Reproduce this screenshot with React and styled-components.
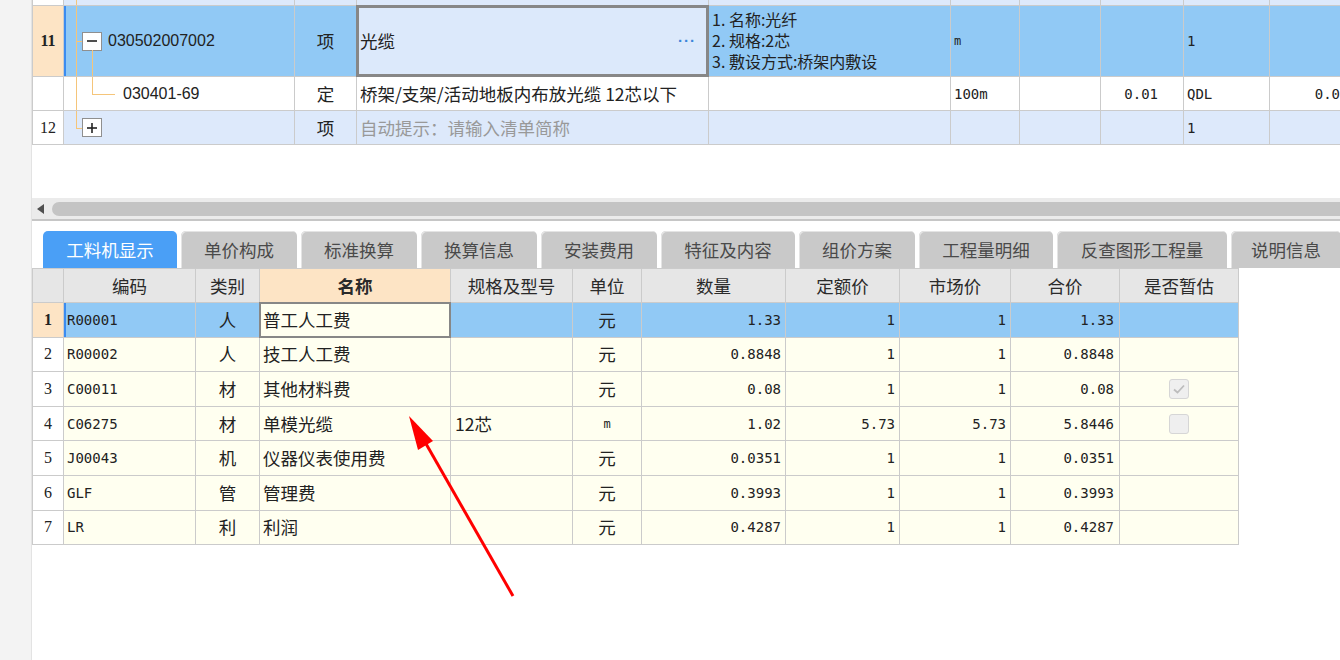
import React from "react";
import styled, { createGlobalStyle } from "styled-components";

const CJK = `"Noto Sans CJK SC", "Noto Sans", sans-serif`;
const MONO = `"DejaVu Sans Mono", "Liberation Mono", "Noto Sans CJK SC", monospace`;
const SANS = `"Liberation Sans", "Noto Sans CJK SC", sans-serif`;
const SERIF = `"Liberation Serif", "Noto Sans CJK SC", serif`;

const LINE = "#cbcbcb";
const SEL = "#91c9f5";
const LIGHT = "#dde9fb";
const PEACH = "#fde4c5";
const CREAM = "#fffff0";
const TREE = "#f5c57a";

const GlobalStyle = createGlobalStyle`
  html, body { margin: 0; padding: 0; background: #fff; overflow: hidden; }
  body { font-family: ${CJK}; color: #222; }
`;

const Page = styled.div`
  position: relative;
  display: flex;
  width: 1340px;
  height: 660px;
  overflow: hidden;
  background: #fff;
`;

const SideStrip = styled.div`
  width: 31px;
  flex: none;
  background: #f3f3f3;
  border-right: 1px solid #e3e3e3;
`;

const Main = styled.div`
  flex: 1;
  min-width: 0;
  display: flex;
  flex-direction: column;
  overflow: hidden;
`;

/* ---------- top table ---------- */
const TopRegion = styled.div`
  height: 198px;
  flex: none;
  background: #fff;
`;

const TopGrid = styled.div`
  display: grid;
  grid-template-columns: 30px 230px 61px 351px 241px 68px 80px 82px 85px 1fr;
  grid-template-rows: 5px 70px 33px 33px;
  gap: 1px;
  background: ${LINE};
  border-left: 1px solid ${LINE};
  border-bottom: 1px solid ${LINE};
`;

const Cell = styled.div`
  display: flex;
  align-items: center;
  min-width: 0;
  overflow: hidden;
  white-space: nowrap;
  background: ${(p) => p.$bg || "#fff"};
  justify-content: ${(p) =>
    p.$align === "center" ? "center" : p.$align === "right" ? "flex-end" : "flex-start"};
  padding: 0 ${(p) => (p.$pr != null ? p.$pr : 3)}px 0 ${(p) => (p.$pl != null ? p.$pl : 3)}px;
  font-family: ${(p) => (p.$mono ? MONO : p.$sans ? SANS : CJK)};
  font-size: ${(p) => p.$size || 17.5}px;
  line-height: 20px;
  color: ${(p) => p.$color || "#222"};
  box-shadow: ${(p) => (p.$mark ? "inset 2px 0 0 #3b8cf0" : "none")};
`;

const RowNum = styled.div`
  display: flex;
  align-items: center;
  justify-content: center;
  background: ${(p) => (p.$active ? PEACH : "#fff")};
  font-family: ${SERIF};
  font-size: 16px;
  font-weight: ${(p) => (p.$active ? 700 : 400)};
  color: #222;
`;

const EditorCell = styled.div`
  position: relative;
  z-index: 1;
  margin: -1px;
  display: flex;
  align-items: center;
  justify-content: space-between;
  border: ${(p) => p.$bw || 3}px solid #878787;
  background: ${(p) => p.$bg};
  padding: 0 10px 0 ${(p) => p.$pl || 1}px;
  font-size: 17.5px;
  line-height: 20px;
  white-space: nowrap;
  overflow: hidden;
`;

const Dots = styled.span`
  color: #3b86d9;
  font-family: ${SANS};
  font-size: 15px;
  font-weight: 700;
  letter-spacing: 1px;
`;

const FeatureCell = styled.div`
  background: ${SEL};
  padding: 3px 3px 0;
  font-size: 16px;
  line-height: 21px;
  white-space: pre-line;
  overflow: hidden;
  color: #222;
`;

const TreeCell = styled(Cell)`
  padding-left: 0;
  align-items: center;
`;

const Gutter = styled.span`
  position: relative;
  align-self: stretch;
  width: 18px;
  flex: none;
  &::before {
    content: "";
    position: absolute;
    left: 12px;
    top: 0;
    width: 1px;
    height: ${(p) => (p.$end ? "50%" : "100%")};
    background: ${TREE};
  }
  &::after {
    content: "";
    display: ${(p) => (p.$branch ? "block" : "none")};
    position: absolute;
    left: 12px;
    top: 50%;
    width: 6px;
    height: 1px;
    background: ${TREE};
  }
`;

const Elbow = styled.span`
  position: relative;
  align-self: stretch;
  width: 33px;
  flex: none;
  &::before {
    content: "";
    position: absolute;
    left: 10px;
    top: 0;
    width: 1px;
    height: 50%;
    background: ${TREE};
  }
  &::after {
    content: "";
    position: absolute;
    left: 10px;
    top: 50%;
    width: 23px;
    height: 1px;
    background: ${TREE};
  }
`;

const ToggleBox = styled.span`
  position: relative;
  width: 20px;
  height: 19px;
  flex: none;
  box-sizing: border-box;
  border: 1px solid #8f8f8f;
  background: #fff;
  display: flex;
  align-items: center;
  justify-content: center;
  &::after {
    content: "";
    display: ${(p) => (p.$open ? "block" : "none")};
    position: absolute;
    left: 9px;
    top: 100%;
    width: 1px;
    height: 40px;
    background: ${TREE};
  }
`;

const CodeText = styled.span`
  margin-left: ${(p) => p.$ml || 6}px;
  font-family: ${SANS};
  font-size: 16px;
  color: #222;
`;

const Sign = ({ plus }) => (
  <svg width="12" height="12" viewBox="0 0 12 12">
    <line x1="1" y1="6" x2="11" y2="6" stroke="#222" strokeWidth="1.6" />
    {plus && <line x1="6" y1="1" x2="6" y2="11" stroke="#222" strokeWidth="1.6" />}
  </svg>
);

/* ---------- scroll bar ---------- */
const HScroll = styled.div`
  height: 21px;
  flex: none;
  display: flex;
  align-items: center;
  gap: 8px;
  padding-left: 5px;
  background: #ebebeb;
  border-bottom: 2px solid #c6c6c6;
`;

const ScrollArrow = styled.span`
  width: 0;
  height: 0;
  border-top: 5px solid transparent;
  border-bottom: 5px solid transparent;
  border-right: 7px solid #505050;
`;

const Thumb = styled.div`
  flex: 1;
  height: 14px;
  border-radius: 7px 0 0 7px;
  background: #c4c4c4;
`;

/* ---------- tabs ---------- */
const TabBar = styled.div`
  display: flex;
  gap: 4px;
  padding: 10px 0 0 11px;
  flex: none;
  overflow: hidden;
`;

const Tab = styled.div`
  width: ${(p) => p.$w}px;
  height: 37px;
  flex: none;
  box-sizing: border-box;
  border-radius: 5px 5px 0 0;
  background: ${(p) => (p.$active ? "#4a9ff6" : "#c9c9c9")};
  color: ${(p) => (p.$active ? "#fff" : "#4a4a4a")};
  box-shadow: ${(p) => (p.$active ? "none" : "inset 1px 1px 0 #e4e4e4")};
  display: flex;
  align-items: center;
  justify-content: center;
  font-size: 17.5px;
  line-height: 20px;
  white-space: nowrap;
`;

/* ---------- bottom table ---------- */
const BottomGrid = styled.div`
  display: grid;
  width: max-content;
  grid-template-columns: 30px 131px 63px 190px 121px 68px 143px 113px 110px 108px 118px;
  grid-template-rows: 33px;
  grid-auto-rows: 33.6px;
  gap: 1px;
  background: ${LINE};
  border: 1px solid ${LINE};
`;

const HeadCell = styled.div`
  display: flex;
  align-items: center;
  justify-content: center;
  background: ${(p) => (p.$hot ? PEACH : "#e6e6e6")};
  font-weight: ${(p) => (p.$hot ? 700 : 400)};
  font-size: 17.5px;
  line-height: 20px;
  color: #2a2a2a;
`;

const Check = styled.span`
  width: 20px;
  height: 20px;
  box-sizing: border-box;
  border: 1px solid #d6d6d6;
  border-radius: 3px;
  background: #efefef;
  display: flex;
  align-items: center;
  justify-content: center;
`;

const ArrowLayer = styled.svg`
  position: absolute;
  left: 0;
  top: 0;
  pointer-events: none;
`;

const tabs = [
  ["工料机显示", 134],
  ["单价构成", 116],
  ["标准换算", 116],
  ["换算信息", 116],
  ["安装费用", 116],
  ["特征及内容", 134],
  ["组价方案", 116],
  ["工程量明细", 134],
  ["反查图形工程量", 170],
  ["说明信息", 110],
];

const heads = ["编码", "类别", "名称", "规格及型号", "单位", "数量", "定额价", "市场价", "合价", "是否暂估"];

const rows = [
  { code: "R00001", type: "人", name: "普工人工费", spec: "", unit: "元", qty: "1.33", quota: "1", market: "1", total: "1.33" },
  { code: "R00002", type: "人", name: "技工人工费", spec: "", unit: "元", qty: "0.8848", quota: "1", market: "1", total: "0.8848" },
  { code: "C00011", type: "材", name: "其他材料费", spec: "", unit: "元", qty: "0.08", quota: "1", market: "1", total: "0.08", est: "on" },
  { code: "C06275", type: "材", name: "单模光缆", spec: "12芯", unit: "m", qty: "1.02", quota: "5.73", market: "5.73", total: "5.8446", est: "off" },
  { code: "J00043", type: "机", name: "仪器仪表使用费", spec: "", unit: "元", qty: "0.0351", quota: "1", market: "1", total: "0.0351" },
  { code: "GLF", type: "管", name: "管理费", spec: "", unit: "元", qty: "0.3993", quota: "1", market: "1", total: "0.3993" },
  { code: "LR", type: "利", name: "利润", spec: "", unit: "元", qty: "0.4287", quota: "1", market: "1", total: "0.4287" },
];

function TopTable() {
  return (
    <TopGrid>
      {/* partial row above */}
      <RowNum />
      <TreeCell $bg={LIGHT}>
        <Gutter />
      </TreeCell>
      {Array.from({ length: 8 }).map((_, i) => (
        <Cell key={i} $bg={LIGHT} />
      ))}

      {/* row 11 */}
      <RowNum $active>11</RowNum>
      <TreeCell $bg={SEL} $mark>
        <Gutter $branch />
        <ToggleBox $open>
          <Sign />
        </ToggleBox>
        <CodeText>030502007002</CodeText>
      </TreeCell>
      <Cell $bg={SEL} $align="center">项</Cell>
      <EditorCell $bg="#dce9fb">
        <span>光缆</span>
        <Dots>···</Dots>
      </EditorCell>
      <FeatureCell>{"1. 名称:光纤\n2. 规格:2芯\n3. 敷设方式:桥架内敷设"}</FeatureCell>
      <Cell $bg={SEL} $mono $size={12}>m</Cell>
      <Cell $bg={SEL} />
      <Cell $bg={SEL} />
      <Cell $bg={SEL} $mono $size={14}>1</Cell>
      <Cell $bg={SEL} />

      {/* child row */}
      <RowNum />
      <TreeCell>
        <Gutter />
        <Elbow />
        <CodeText $ml={8}>030401-69</CodeText>
      </TreeCell>
      <Cell $align="center">定</Cell>
      <Cell>桥架/支架/活动地板内布放光缆 12芯以下</Cell>
      <Cell />
      <Cell $mono $size={14}>100m</Cell>
      <Cell />
      <Cell $mono $size={14} $align="right" $pr={25}>0.01</Cell>
      <Cell $mono $size={14}>QDL</Cell>
      <Cell $mono $size={14} $align="right" $pr={0}>0.0</Cell>

      {/* row 12 */}
      <RowNum>12</RowNum>
      <TreeCell $bg={LIGHT}>
        <Gutter $end $branch />
        <ToggleBox>
          <Sign plus />
        </ToggleBox>
      </TreeCell>
      <Cell $bg={LIGHT} $align="center">项</Cell>
      <Cell $bg={LIGHT} $color="#999">自动提示：请输入清单简称</Cell>
      <Cell $bg={LIGHT} />
      <Cell $bg={LIGHT} />
      <Cell $bg={LIGHT} />
      <Cell $bg={LIGHT} />
      <Cell $bg={LIGHT} $mono $size={14}>1</Cell>
      <Cell $bg={LIGHT} />
    </TopGrid>
  );
}

function BottomTable() {
  return (
    <BottomGrid>
      <HeadCell />
      {heads.map((h) => (
        <HeadCell key={h} $hot={h === "名称"}>
          {h}
        </HeadCell>
      ))}
      {rows.map((r, i) => {
        const sel = i === 0;
        const bg = sel ? SEL : CREAM;
        return (
          <React.Fragment key={r.code}>
            <RowNum $active={sel}>{i + 1}</RowNum>
            <Cell $bg={bg} $mono $size={14} $mark={sel}>{r.code}</Cell>
            <Cell $bg={bg} $align="center">{r.type}</Cell>
            {sel ? (
              <EditorCell $bg={CREAM} $bw={2} $pl={2}>
                <span>{r.name}</span>
              </EditorCell>
            ) : (
              <Cell $bg={bg}>{r.name}</Cell>
            )}
            <Cell $bg={bg} $pl={4}>{r.spec}</Cell>
            {r.unit === "m" ? (
              <Cell $bg={bg} $align="center" $mono $size={12}>m</Cell>
            ) : (
              <Cell $bg={bg} $align="center">{r.unit}</Cell>
            )}
            <Cell $bg={bg} $align="right" $mono $size={14} $pr={4}>{r.qty}</Cell>
            <Cell $bg={bg} $align="right" $mono $size={14} $pr={4}>{r.quota}</Cell>
            <Cell $bg={bg} $align="right" $mono $size={14} $pr={4}>{r.market}</Cell>
            <Cell $bg={bg} $align="right" $mono $size={14} $pr={5}>{r.total}</Cell>
            <Cell $bg={bg} $align="center" $pl={0} $pr={0}>
              {r.est && (
                <Check>
                  {r.est === "on" && (
                    <svg width="14" height="12" viewBox="0 0 14 12">
                      <path d="M2 6.5 L5.5 9.5 L12 2.5" fill="none" stroke="#bcbcbc" strokeWidth="1.8" />
                    </svg>
                  )}
                </Check>
              )}
            </Cell>
          </React.Fragment>
        );
      })}
    </BottomGrid>
  );
}

export default function App() {
  return (
    <>
      <GlobalStyle />
      <Page>
        <SideStrip />
        <Main>
          <TopRegion>
            <TopTable />
          </TopRegion>
          <HScroll>
            <ScrollArrow />
            <Thumb />
          </HScroll>
          <TabBar>
            {tabs.map(([t, w], i) => (
              <Tab key={t} $w={w} $active={i === 0}>
                {t}
              </Tab>
            ))}
          </TabBar>
          <BottomTable />
        </Main>
        <ArrowLayer width="1340" height="660" viewBox="0 0 1340 660">
          <line x1="513" y1="596" x2="425" y2="442" stroke="#ff0000" strokeWidth="3" />
          <polygon points="409,416 433,441 418,450" fill="#ff0000" />
        </ArrowLayer>
      </Page>
    </>
  );
}
